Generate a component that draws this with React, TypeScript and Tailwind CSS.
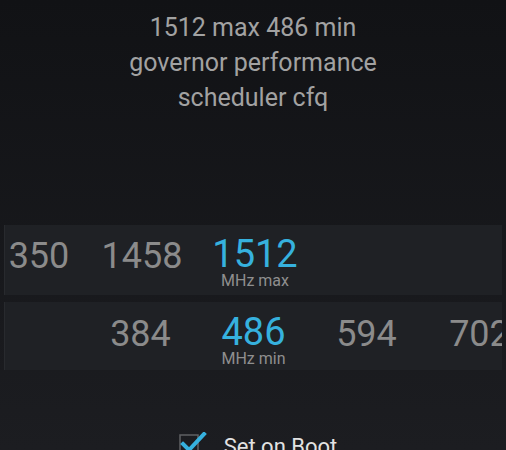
import React from 'react';

type Cell = { value?: string; width: number; selected?: boolean; label?: string };

const maxRow: Cell[] = [
  { value: '350', width: 68 },
  { value: '1458', width: 138 },
  { value: '1512', width: 88, selected: true, label: 'MHz max' },
];

const minRow: Cell[] = [
  { width: 113 },
  { value: '384', width: 113 },
  { value: '486', width: 113, selected: true, label: 'MHz min' },
  { value: '594', width: 113 },
  { value: '702', width: 113 },
];

function PickerCell({ cell }: { cell: Cell }) {
  return (
    <div className="flex shrink-0 flex-col items-center" style={{ width: cell.width }}>
      {cell.selected ? (
        <>
          <span className="text-[38px] leading-[38px] text-[#36b1de]">{cell.value}</span>
          <span className="text-[16px] leading-[16px] text-[#8f8f8f]">{cell.label}</span>
        </>
      ) : (
        <span className="mt-[2px] text-[36px] leading-[38px] text-[#8b8b8b]">{cell.value}</span>
      )}
    </div>
  );
}

export default function App() {
  return (
    <div
      className="h-[450px] w-[506px] overflow-hidden bg-gradient-to-b from-[#111215] to-[#1c1d21] font-['Roboto','Liberation_Sans',sans-serif]"
    >
      <div className="pt-[10px] text-center text-[25px] leading-[35px] text-[#a2a2a2]">
        <p>1512 max 486 min</p>
        <p>governor performance</p>
        <p>scheduler cfq</p>
      </div>

      <div className="mx-[4px] mt-[110px] flex h-[70px] overflow-hidden border-l border-[#282a2e] bg-[#1f2125] pt-[10px]">
        {maxRow.map((c, i) => (
          <PickerCell key={i} cell={c} />
        ))}
      </div>

      <div className="mx-[4px] mt-[7px] h-[68px] overflow-hidden border-l border-[#282a2e] bg-[#1f2125] pt-[11px]">
        <div className="ml-[-34px] flex">
          {minRow.map((c, i) => (
            <PickerCell key={i} cell={c} />
          ))}
        </div>
      </div>

      <div className="mt-[63px] flex items-start justify-center gap-[15px] pl-[10px]">
        <svg width="30" height="26" viewBox="0 0 30 26" className="mt-[-1px]">
          <rect x="1" y="3" width="18" height="18" fill="none" stroke="#5f6063" strokeWidth="1.5" />
          <path d="M4 12 L10 18 L25 2" fill="none" stroke="#36b1de" strokeWidth="4" strokeLinecap="square" />
        </svg>
        <span className="text-[22px] leading-[28px] text-[#e2e2e2]">Set on Boot</span>
      </div>
    </div>
  );
}
